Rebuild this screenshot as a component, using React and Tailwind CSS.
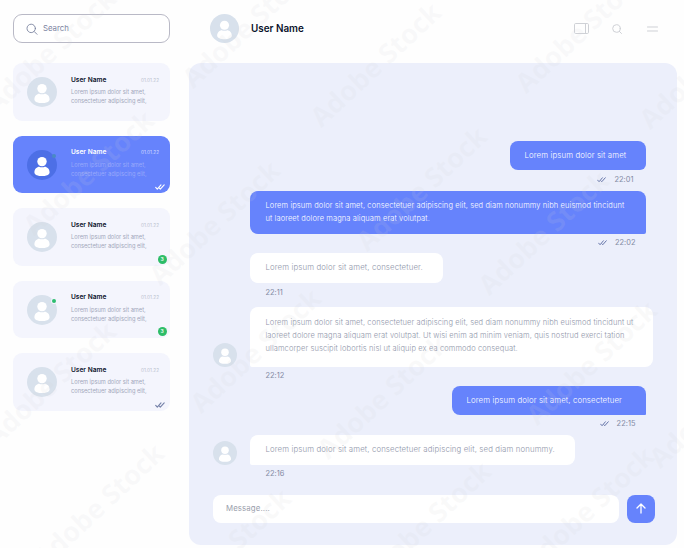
import React from "react";

const WATERMARKS = [
  [50, 50], [247, 25], [375, 64], [580, 30], [704, 66],
  [88, 172], [214, 222], [421, 188], [543, 232],
  [50, 383], [255, 350], [382, 396], [591, 362], [714, 405],
  [98, 505], [225, 550], [425, 523], [588, 508],
];

const CHATS = [
  {},
  { active: true, online: true, read: true },
  { unread: true },
  { online: true, unread: true },
  { read: true },
];

function Avatar({ className, circle = "#d8e1ec" }) {
  return (
    <svg viewBox="0 0 30 30" className={className}>
      <circle cx="15" cy="15" r="15" fill={circle} />
      <circle cx="15" cy="11.600" r="4.700" fill="#fff" />
      <path d="M7.400 22.400c0-3.400 2.600-5.600 4.900-5.600 1 .7 4.400.7 5.400 0 2.300 0 4.900 2.200 4.900 5.600 0 2.400-3.700 3.600-7.600 3.600s-7.600-1.200-7.600-3.600z" fill="#fff" />
    </svg>
  );
}

function Checks({ className }) {
  return (
    <svg viewBox="0 0 10 6" className={className} fill="none" stroke="currentColor" strokeWidth="1.100" strokeLinecap="round" strokeLinejoin="round">
      <path d="M.7 3.400 2.300 5.200 6 .8M4.400 4.200l.9 1L9.200.8" />
    </svg>
  );
}

function ChatCard({ active, online, unread, read }) {
  return (
    <div className={`relative flex h-[57.500px] shrink-0 rounded-[9px] pl-3.5 ${active ? "bg-[#6683fc]" : "bg-[#f4f5fd]"}`}>
      <div className="relative mt-3.5 size-[30px]">
        <Avatar className="size-[30px]" circle={active ? "#4d6fe6" : "#d8e1ec"} />
        {online && (
          <span className={`absolute top-[4px] left-[24.500px] size-[4px] rounded-full ${active ? "bg-[#4a89c4]" : "bg-[#2dbd70] ring-1 ring-[#f4f5fd]"}`} />
        )}
      </div>
      <div className="mt-[11.500px] ml-[14px] flex-1">
        <div className="flex items-center justify-between pr-[10.500px]">
          <span className={`text-[6.600px] leading-[10px] font-semibold ${active ? "text-white" : "text-[#0b132b]"}`}>User Name</span>
          <span className={`text-[4.700px] leading-[10px] ${active ? "text-[#d3dbff]" : "text-[#b9bfce]"}`}>01.01.22</span>
        </div>
        <p className={`mt-[2.500px] text-[5.700px] leading-[9px] whitespace-nowrap ${active ? "text-[#98a9fb]" : "text-[#a2a8bb]"}`}>
          Lorem ipsum dolor sit amet,<br />consectetuer adipiscing elit,
        </p>
      </div>
      {unread && (
        <span className="absolute right-[3px] bottom-[2px] flex size-[9px] items-center justify-center rounded-full bg-[#2dbd68] text-[5px] leading-none font-semibold text-white">3</span>
      )}
      {read && (
        <Checks className={`absolute right-[5px] bottom-[3px] h-[6px] w-[10px] ${active ? "text-white" : "text-[#7480a8]"}`} />
      )}
    </div>
  );
}

function SentTime({ children, className }) {
  return (
    <div className={`flex items-center justify-end gap-2 text-[7.400px] leading-[10px] font-normal tracking-[0.050px] text-[#8289a3] ${className}`}>
      <Checks className="h-[5.500px] w-[9px] text-[#6474a8]" />
      <span className="text-right">{children}</span>
    </div>
  );
}

function ReceivedTime({ children, className }) {
  return (
    <div className={`ml-[52.500px] text-[7.400px] leading-[10px] font-normal tracking-[0.050px] text-[#8289a3] ${className}`}>{children}</div>
  );
}

export default function App() {
  return (
    <div className="relative flex h-[548px] w-[684px] overflow-hidden bg-[#fefefe] font-['Inter','Liberation_Sans',sans-serif]">
      <aside className="ml-[13px] flex w-[156.500px] shrink-0 flex-col pt-3.5">
        <div className="flex h-[29px] shrink-0 items-center rounded-[9px] border border-[#b9b9c6] bg-white pl-3 text-[#7b839f]">
          <svg viewBox="0 0 12 12" className="size-3" fill="none" stroke="currentColor" strokeWidth="0.900" strokeLinecap="round">
            <circle cx="5.200" cy="5.400" r="4.200" />
            <path d="m8.300 8.600 2.700 2.700" />
          </svg>
          <span className="ml-[5px] text-[7.800px] leading-none">Search</span>
        </div>
        <div className="mt-5 flex flex-col gap-[15px]">
          {CHATS.map((chat, i) => <ChatCard key={i} {...chat} />)}
        </div>
      </aside>

      <main className="ml-[19.500px] flex w-[488px] shrink-0 flex-col">
        <header className="flex h-[63px] shrink-0 items-center pr-[19px] pb-[6px] pl-[21px]">
          <Avatar className="size-[29px]" />
          <h1 className="ml-[12px] flex-1 text-[9.900px] font-semibold text-[#0b132b]">User Name</h1>
          <div className="flex items-center gap-[23px] text-[#cfd1d6]">
            <svg viewBox="0 0 15 11" className="h-[11px] w-[15px]" fill="none" stroke="currentColor" strokeWidth="1">
              <rect x=".5" y=".5" width="14" height="10" rx="1.200" />
              <path d="M11.500.5v10" />
            </svg>
            <svg viewBox="0 0 10 10" className="size-2.5" fill="none" stroke="currentColor" strokeWidth="1" strokeLinecap="round">
              <circle cx="4.500" cy="4.500" r="3.800" />
              <path d="m7.300 7.300 2.200 2.200" />
            </svg>
            <svg viewBox="0 0 11 6" className="ml-[2px] h-[6px] w-[11px]" fill="none" stroke="currentColor" strokeWidth="1" strokeLinecap="round">
              <path d="M.5 1h10M.5 5h10" />
            </svg>
          </div>
        </header>

        <section className="flex h-[481.500px] shrink-0 flex-col rounded-[12px] bg-[#eceffb] px-6 pt-[78px] text-[7.800px] leading-[13px] font-light tracking-[0.130px] whitespace-nowrap">
          <div className="mr-[7.500px] flex h-[29px] w-[136px] items-center self-end rounded-[8px] rounded-br-[6px] bg-[#6683fc] pl-[15px] text-white">
            Lorem ipsum dolor sit amet
          </div>
          <SentTime className="mt-[4.500px] mr-[19.500px]">22:01</SentTime>

          <div className="mt-[6.500px] ml-[37px] h-[43px] w-[396px] rounded-[8px] rounded-br-[2px] bg-[#6683fc] pt-[8px] pl-[15.500px] text-[7.500px] tracking-[0.107px] text-white">
            Lorem ipsum dolor sit amet, consectetuer adipiscing elit, sed diam nonummy nibh euismod tincidunt<br />
            ut laoreet dolore magna aliquam erat volutpat.
          </div>
          <SentTime className="mt-[4px] mr-[17.500px]">22:02</SentTime>

          <div className="mt-[5px] ml-[37px] flex h-[29.500px] w-[193px] items-center rounded-[8px] bg-white pl-[15.500px] text-[#9096aa]">
            Lorem ipsum dolor sit amet, consectetuer.
          </div>
          <ReceivedTime className="mt-[5.500px]">22:11</ReceivedTime>

          <div className="mt-[8.500px] flex h-[60px] items-end">
            <Avatar className="size-[24px]" />
            <div className="ml-[13px] h-[60px] w-[403px] shrink-0 rounded-[8px] rounded-bl-[2px] bg-white pt-[9.500px] pl-[15.500px] text-[7.500px] tracking-[0.107px] text-[#9096aa]">
              Lorem ipsum dolor sit amet, consectetuer adipiscing elit, sed diam nonummy nibh euismod tincidunt ut<br />
              laoreet dolore magna aliquam erat volutpat. Ut wisi enim ad minim veniam, quis nostrud exerci tation<br />
              ullamcorper suscipit lobortis nisl ut aliquip ex ea commodo consequat.
            </div>
          </div>
          <ReceivedTime className="mt-[4px]">22:12</ReceivedTime>

          <div className="mt-[5px] mr-[7.500px] flex h-[29px] w-[194px] shrink-0 items-center self-end rounded-[8px] rounded-br-[1px] bg-[#6683fc] pl-[15px] text-white">
            Lorem ipsum dolor sit amet, consectetuer
          </div>
          <SentTime className="mt-[4.500px] mr-[17.500px]">22:15</SentTime>

          <div className="mt-[6px] flex h-[29.500px] items-end">
            <Avatar className="size-[24px]" />
            <div className="ml-[13px] flex h-[29.500px] w-[324.500px] items-center rounded-[8px] rounded-bl-[2px] bg-white pl-[15.500px] text-[#9096aa]">
              Lorem ipsum dolor sit amet, consectetuer adipiscing elit, sed diam nonummy.
            </div>
          </div>
          <ReceivedTime className="mt-[4.500px]">22:16</ReceivedTime>

          <div className="mt-[15.500px] flex gap-[8px]">
            <div className="flex h-[28px] w-[406px] shrink-0 items-center rounded-[8px] bg-white pl-[13px] font-normal text-[#9a9eac]">Message....</div>
            <div className="flex size-[28px] shrink-0 items-center justify-center rounded-[8px] bg-[#6683fc]">
              <svg viewBox="0 0 10 11" className="h-[11px] w-[10px]" fill="none" stroke="#fff" strokeWidth="1.300" strokeLinecap="round" strokeLinejoin="round">
                <path d="M5 10V1M1 5l4-4 4 4" />
              </svg>
            </div>
          </div>
        </section>
      </main>

      <div className="pointer-events-none absolute inset-0 overflow-hidden" aria-hidden="true">
        {WATERMARKS.map(([x, y]) => (
          <span
            key={`${x}-${y}`}
            className="absolute -translate-x-1/2 -translate-y-1/2 -rotate-[43deg] font-['Open_Sans',sans-serif] text-[27px] leading-none font-bold whitespace-nowrap text-[#d0d1d6]/12"
            style={{ left: x, top: y }}
          >
            Adobe Stock
          </span>
        ))}
      </div>
    </div>
  );
}
